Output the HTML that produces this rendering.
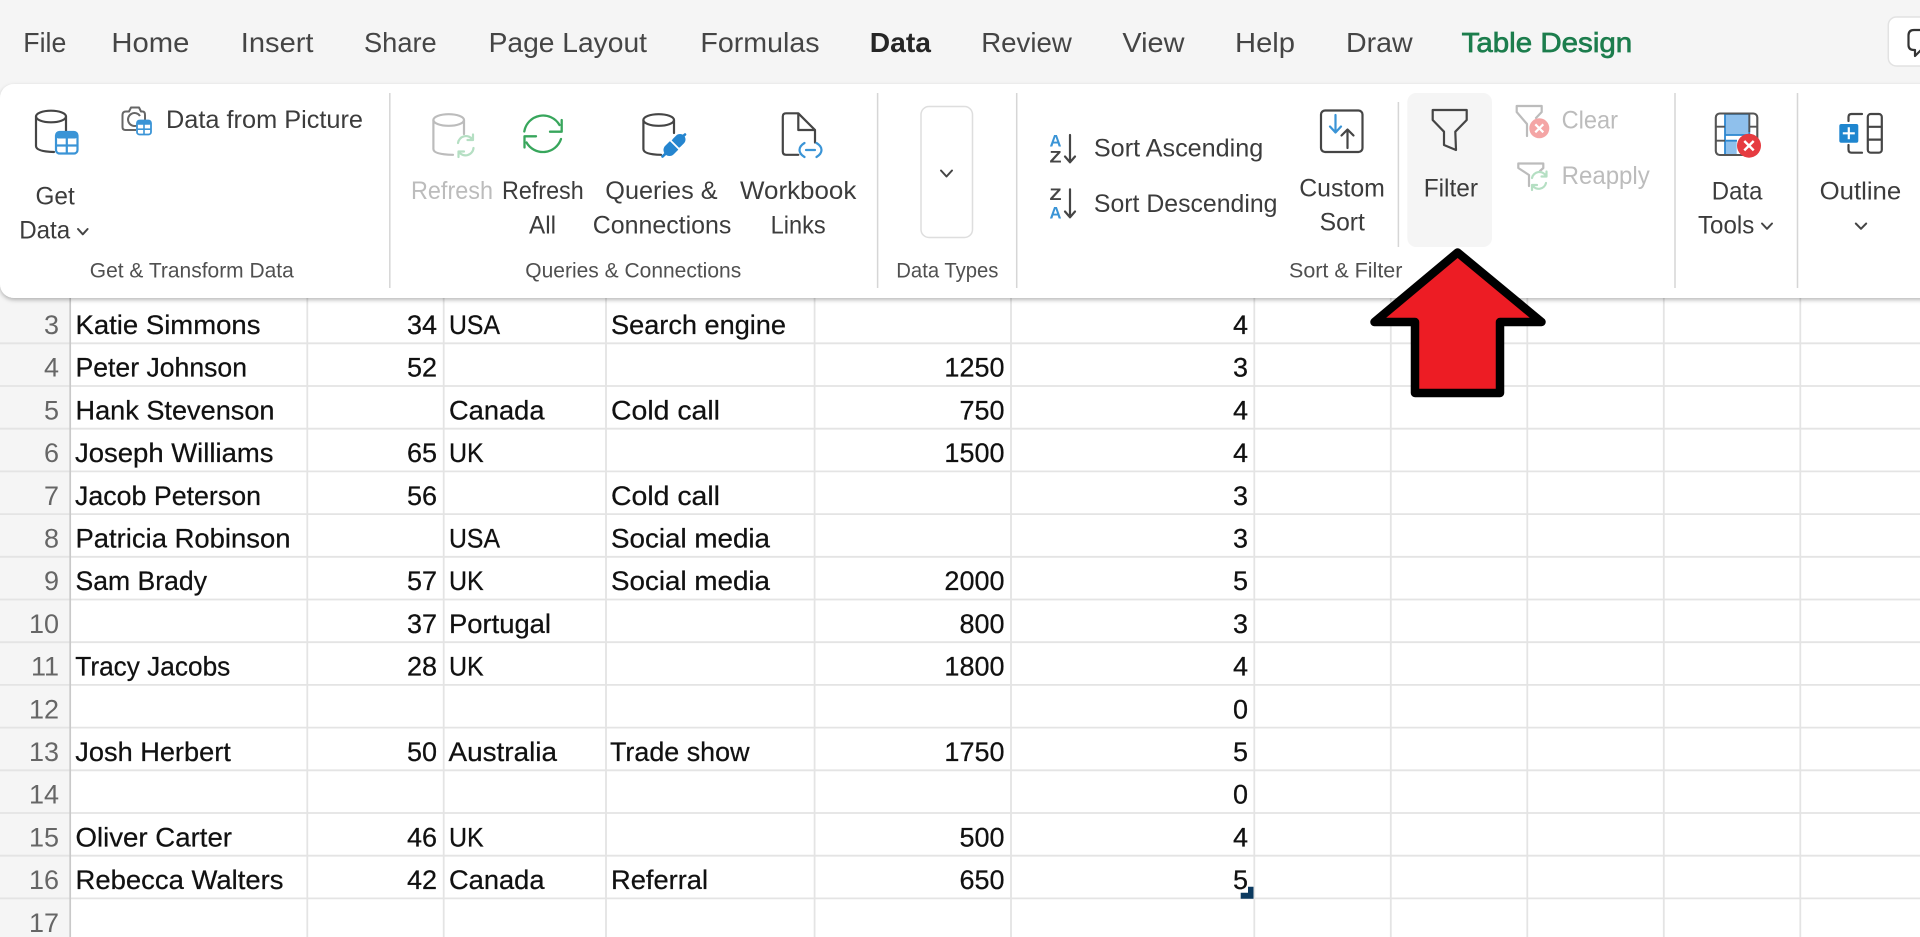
<!DOCTYPE html>
<html lang="en"><head><meta charset="utf-8"><title>Excel Data ribbon</title>
<style>
html,body{margin:0;padding:0;width:1920px;height:937px;overflow:hidden;background:#fff}
svg{display:block;position:absolute;left:0;top:0;filter:blur(.35px)}
text{font-family:"Liberation Sans",sans-serif;white-space:pre}
.m{font-size:28px;fill:#454545}
.r{font-size:25px;fill:#3c3c3c}
.d{font-size:25px;fill:#bcbcbc}
.g{font-size:21px;fill:#505050}
.c{font-size:27px;fill:#111;stroke:#111;stroke-width:.25}
.n{font-size:27px;fill:#111;stroke:#111;stroke-width:.25;text-anchor:end}
.h{font-size:27px;fill:#666;text-anchor:end}
.ic{fill:none;stroke:#454545;stroke-width:2.2;stroke-linecap:round;stroke-linejoin:round}
.bl{fill:none;stroke:#3a94d6;stroke-width:2.2;stroke-linecap:round;stroke-linejoin:round}
.gy{fill:none;stroke:#bcbcbc;stroke-width:2.2;stroke-linecap:round;stroke-linejoin:round}
.pg{fill:none;stroke:#b5dfc3;stroke-width:2.2;stroke-linecap:round;stroke-linejoin:round}
.ch{fill:none;stroke:#454545;stroke-width:2;stroke-linecap:round;stroke-linejoin:round}
</style></head><body>
<svg width="1920" height="937" viewBox="0 0 1920 937" xmlns="http://www.w3.org/2000/svg">
<defs><filter id="s" x="-5%" y="-10%" width="110%" height="125%"><feDropShadow dx="0" dy="2" stdDeviation="2.2" flood-color="#000" flood-opacity=".28"/></filter></defs>
<rect width="1920" height="937" fill="#fff"/>
<rect width="70" height="937" fill="#f5f5f5"/>
<g stroke="#e4e4e4" stroke-width="1.8" fill="none">
<path d="M0 343.3H1920M0 386H1920M0 428.7H1920M0 471.4H1920M0 514.1H1920M0 556.8H1920M0 599.5H1920M0 642.2H1920M0 684.9H1920M0 727.6H1920M0 770.3H1920M0 813H1920M0 855.7H1920M0 898.4H1920"/>
<path d="M307.3 290V937M443.7 290V937M606 290V937M814.6 290V937M1011 290V937M1254.3 290V937M1390.8 290V937M1527.3 290V937M1663.8 290V937M1800.3 290V937"/>
</g>
<path d="M70.2 290V937" stroke="#c9c9c9" stroke-width="1.7"/>
<g>
<text class="h" x="59" y="334">3</text><text class="h" x="59" y="376.7">4</text><text class="h" x="59" y="419.4">5</text><text class="h" x="59" y="462.1">6</text><text class="h" x="59" y="504.8">7</text><text class="h" x="59" y="547.5">8</text><text class="h" x="59" y="590.2">9</text><text class="h" x="59" y="632.9">10</text><text class="h" x="59" y="675.6">11</text><text class="h" x="59" y="718.3">12</text><text class="h" x="59" y="761">13</text><text class="h" x="59" y="803.7">14</text><text class="h" x="59" y="846.4">15</text><text class="h" x="59" y="889.1">16</text><text class="h" x="59" y="931.8">17</text>
</g>
<text class="c" x="75.5" y="334" textLength="185" lengthAdjust="spacingAndGlyphs">Katie Simmons</text>
<text class="c" x="75.5" y="376.7" textLength="171.5" lengthAdjust="spacingAndGlyphs">Peter Johnson</text>
<text class="c" x="75.5" y="419.4" textLength="199" lengthAdjust="spacingAndGlyphs">Hank Stevenson</text>
<text class="c" x="75" y="462.1" textLength="198.5" lengthAdjust="spacingAndGlyphs">Joseph Williams</text>
<text class="c" x="75" y="504.8" textLength="186" lengthAdjust="spacingAndGlyphs">Jacob Peterson</text>
<text class="c" x="75.5" y="547.5" textLength="215" lengthAdjust="spacingAndGlyphs">Patricia Robinson</text>
<text class="c" x="75.5" y="590.2" textLength="131.5" lengthAdjust="spacingAndGlyphs">Sam Brady</text>
<text class="c" x="75.3" y="675.6" textLength="155" lengthAdjust="spacingAndGlyphs">Tracy Jacobs</text>
<text class="c" x="75.3" y="761" textLength="155.5" lengthAdjust="spacingAndGlyphs">Josh Herbert</text>
<text class="c" x="75.5" y="846.4" textLength="156.5" lengthAdjust="spacingAndGlyphs">Oliver Carter</text>
<text class="c" x="75.5" y="889.1" textLength="208" lengthAdjust="spacingAndGlyphs">Rebecca Walters</text>
<text class="n" x="437" y="334">34</text><text class="n" x="437" y="376.7">52</text><text class="n" x="437" y="462.1">65</text><text class="n" x="437" y="504.8">56</text><text class="n" x="437" y="590.2">57</text><text class="n" x="437" y="632.9">37</text><text class="n" x="437" y="675.6">28</text><text class="n" x="437" y="761">50</text><text class="n" x="437" y="846.4">46</text><text class="n" x="437" y="889.1">42</text>
<text class="c" x="449" y="334" textLength="51" lengthAdjust="spacingAndGlyphs">USA</text>
<text class="c" x="449" y="419.4" textLength="95.5" lengthAdjust="spacingAndGlyphs">Canada</text>
<text class="c" x="449" y="462.1" textLength="34.7" lengthAdjust="spacingAndGlyphs">UK</text>
<text class="c" x="449" y="547.5" textLength="51" lengthAdjust="spacingAndGlyphs">USA</text>
<text class="c" x="449" y="590.2" textLength="34.7" lengthAdjust="spacingAndGlyphs">UK</text>
<text class="c" x="449" y="632.9" textLength="102" lengthAdjust="spacingAndGlyphs">Portugal</text>
<text class="c" x="449" y="675.6" textLength="34.7" lengthAdjust="spacingAndGlyphs">UK</text>
<text class="c" x="448.5" y="761" textLength="108.5" lengthAdjust="spacingAndGlyphs">Australia</text>
<text class="c" x="449" y="846.4" textLength="34.7" lengthAdjust="spacingAndGlyphs">UK</text>
<text class="c" x="449" y="889.1" textLength="95.5" lengthAdjust="spacingAndGlyphs">Canada</text>
<text class="c" x="611" y="334" textLength="175" lengthAdjust="spacingAndGlyphs">Search engine</text>
<text class="c" x="611" y="419.4" textLength="109" lengthAdjust="spacingAndGlyphs">Cold call</text>
<text class="c" x="611" y="504.8" textLength="109" lengthAdjust="spacingAndGlyphs">Cold call</text>
<text class="c" x="611" y="547.5" textLength="159" lengthAdjust="spacingAndGlyphs">Social media</text>
<text class="c" x="611" y="590.2" textLength="159" lengthAdjust="spacingAndGlyphs">Social media</text>
<text class="c" x="610" y="761" textLength="139.5" lengthAdjust="spacingAndGlyphs">Trade show</text>
<text class="c" x="611" y="889.1" textLength="97" lengthAdjust="spacingAndGlyphs">Referral</text>
<text class="n" x="1004.5" y="376.7">1250</text><text class="n" x="1004.5" y="419.4">750</text><text class="n" x="1004.5" y="462.1">1500</text><text class="n" x="1004.5" y="590.2">2000</text><text class="n" x="1004.5" y="632.9">800</text><text class="n" x="1004.5" y="675.6">1800</text><text class="n" x="1004.5" y="761">1750</text><text class="n" x="1004.5" y="846.4">500</text><text class="n" x="1004.5" y="889.1">650</text>
<text class="n" x="1248" y="334">4</text><text class="n" x="1248" y="376.7">3</text><text class="n" x="1248" y="419.4">4</text><text class="n" x="1248" y="462.1">4</text><text class="n" x="1248" y="504.8">3</text><text class="n" x="1248" y="547.5">3</text><text class="n" x="1248" y="590.2">5</text><text class="n" x="1248" y="632.9">3</text><text class="n" x="1248" y="675.6">4</text><text class="n" x="1248" y="718.3">0</text><text class="n" x="1248" y="761">5</text><text class="n" x="1248" y="803.7">0</text><text class="n" x="1248" y="846.4">4</text><text class="n" x="1248" y="889.1">5</text>
<path d="M1248 886.7H1253.5V898.7H1240.7V892.7H1248Z" fill="#0c3a60"/>

<!-- title band -->
<rect width="1920" height="92" fill="#f5f5f5"/>
<rect x="1888.3" y="17" width="60" height="49" rx="8" fill="#fff" stroke="#e2e2e2" stroke-width="1.5"/>
<path d="M1922 30H1914Q1908.5 30 1908.5 35.5V45Q1908.5 50 1914 50H1915V56L1921 50H1924" fill="none" stroke="#333" stroke-width="2.2" stroke-linejoin="round"/>
<text class="m" x="23.3" y="52" textLength="43" lengthAdjust="spacingAndGlyphs">File</text>
<text class="m" x="111.4" y="52" textLength="78" lengthAdjust="spacingAndGlyphs">Home</text>
<text class="m" x="240.8" y="52" textLength="72.7" lengthAdjust="spacingAndGlyphs">Insert</text>
<text class="m" x="364" y="52" textLength="72.7" lengthAdjust="spacingAndGlyphs">Share</text>
<text class="m" x="488.6" y="52" textLength="158.4" lengthAdjust="spacingAndGlyphs">Page Layout</text>
<text class="m" x="700.4" y="52" textLength="119.2" lengthAdjust="spacingAndGlyphs">Formulas</text>
<text class="m" x="869.8" y="52" textLength="61.2" lengthAdjust="spacingAndGlyphs" font-weight="700" style="fill:#262626">Data</text>
<text class="m" x="981.2" y="52" textLength="90.6" lengthAdjust="spacingAndGlyphs">Review</text>
<text class="m" x="1122.4" y="52" textLength="62.1" lengthAdjust="spacingAndGlyphs">View</text>
<text class="m" x="1235" y="52" textLength="60" lengthAdjust="spacingAndGlyphs">Help</text>
<text class="m" x="1346" y="52" textLength="66.7" lengthAdjust="spacingAndGlyphs">Draw</text>
<text class="m" x="1461.6" y="52" textLength="170.6" lengthAdjust="spacingAndGlyphs" style="fill:#1c7d4d;stroke:#1c7d4d;stroke-width:.7">Table Design</text>

<!-- ribbon -->
<rect x="0" y="84" width="1980" height="214" rx="14" fill="#fff" filter="url(#s)"/>
<g stroke="#d6d6d6" stroke-width="1.5">
<path d="M389.8 93V288M877.6 93V288M1016.7 93V288M1675 93V288M1797.5 93V288M1398.4 102V247"/>
</g>
<rect x="1407.3" y="93" width="84.7" height="154" rx="9" fill="#f5f5f5"/>

<text class="r" x="35.5" y="204.3" textLength="39.2" lengthAdjust="spacingAndGlyphs">Get</text>
<text class="r" x="19.2" y="238.7" textLength="51" lengthAdjust="spacingAndGlyphs">Data</text>
<path class="ch" d="M78 229L82.8 234.3L87.6 229"/>
<text class="r" x="166" y="128" textLength="197" lengthAdjust="spacingAndGlyphs">Data from Picture</text>
<text class="g" x="89.8" y="277.3" textLength="204" lengthAdjust="spacingAndGlyphs">Get &amp; Transform Data</text>
<text class="d" x="411" y="199" textLength="82" lengthAdjust="spacingAndGlyphs">Refresh</text>
<text class="r" x="502" y="199" textLength="81.7" lengthAdjust="spacingAndGlyphs">Refresh</text>
<text class="r" x="529" y="233.5" textLength="27" lengthAdjust="spacingAndGlyphs">All</text>
<text class="r" x="605.3" y="199" textLength="112.3" lengthAdjust="spacingAndGlyphs">Queries &amp;</text>
<text class="r" x="592.7" y="233.5" textLength="138.7" lengthAdjust="spacingAndGlyphs">Connections</text>
<text class="g" x="525.3" y="277.3" textLength="215.9" lengthAdjust="spacingAndGlyphs">Queries &amp; Connections</text>
<text class="r" x="740" y="199" textLength="116.3" lengthAdjust="spacingAndGlyphs">Workbook</text>
<text class="r" x="770.6" y="233.5" textLength="55.1" lengthAdjust="spacingAndGlyphs">Links</text>
<rect x="921" y="106.5" width="51.5" height="131" rx="8" fill="#fff" stroke="#dedede" stroke-width="1.5"/>
<path class="ch" d="M941 170.5L946.5 176.5L952 170.5"/>
<text class="g" x="896.3" y="277.3" textLength="102.1" lengthAdjust="spacingAndGlyphs">Data Types</text>
<text class="r" x="1093.9" y="156.7" textLength="169.4" lengthAdjust="spacingAndGlyphs">Sort Ascending</text>
<text class="r" x="1093.9" y="212" textLength="183.6" lengthAdjust="spacingAndGlyphs">Sort Descending</text>
<text class="r" x="1299.2" y="196.7" textLength="85.7" lengthAdjust="spacingAndGlyphs">Custom</text>
<text class="r" x="1319.6" y="230.7" textLength="45.3" lengthAdjust="spacingAndGlyphs">Sort</text>
<text class="r" x="1423.7" y="196.7" textLength="54.3" lengthAdjust="spacingAndGlyphs">Filter</text>
<text class="d" x="1561.6" y="128.3" textLength="56.4" lengthAdjust="spacingAndGlyphs">Clear</text>
<text class="d" x="1561.6" y="184" textLength="88.2" lengthAdjust="spacingAndGlyphs">Reapply</text>
<text class="g" x="1289" y="277.3" textLength="113.4" lengthAdjust="spacingAndGlyphs">Sort &amp; Filter</text>
<text class="r" x="1711.8" y="199.3" textLength="50.6" lengthAdjust="spacingAndGlyphs">Data</text>
<text class="r" x="1698" y="233.3" textLength="56.3" lengthAdjust="spacingAndGlyphs">Tools</text>
<path class="ch" d="M1762 223.5L1767 228.8L1772 223.5"/>
<text class="r" x="1819.6" y="199.3" textLength="81.6" lengthAdjust="spacingAndGlyphs">Outline</text>
<path class="ch" d="M1855.8 223.5L1861 228.8L1866.2 223.5"/>

<!-- Get Data icon -->
<ellipse class="ic" cx="51" cy="116.5" rx="15" ry="5.8"/>
<path class="ic" d="M36 116.5V146Q36 151.5 54 152M66 116.5V131"/>
<rect x="56" y="132" width="21.5" height="21.5" rx="3.5" fill="#fff" stroke="#3a94d6" stroke-width="2.2"/>
<rect x="56" y="132" width="21.5" height="6.5" rx="2.5" fill="#3a94d6"/>
<path d="M66.8 138V153M56 145.5H77" stroke="#3a94d6" stroke-width="2.2"/>
<!-- Camera icon -->
<path d="M136 130H125.5Q122.5 130 122.5 127V115Q122.5 111.5 126 111.5H129L131 107.5H139L141 111.5H142.5Q145 111.5 145 115V120" fill="none" stroke="#666" stroke-width="2" stroke-linejoin="round"/>
<path d="M137 125.5A6.5 6.5 0 1 1 140 116" fill="none" stroke="#666" stroke-width="2"/>
<rect x="137" y="120.5" width="14" height="14" rx="2.5" fill="#fff" stroke="#3a94d6" stroke-width="1.8"/>
<rect x="137" y="120.5" width="14" height="4.2" rx="1.5" fill="#3a94d6"/>
<path d="M144 124V134M137 129.2H151" stroke="#3a94d6" stroke-width="1.6"/>
<!-- Refresh (disabled) -->
<ellipse class="gy" cx="448.7" cy="120" rx="15.3" ry="5.8"/>
<path class="gy" d="M433.4 120V149Q433.4 154.5 453 154.8M464 120V134"/>
<path class="pg" d="M458 143A8 8 0 0 1 472.5 139.5M473.5 148A8 8 0 0 1 459 152M473 134.5V140H467.5M458.5 157V151.5H464"/>
<!-- Refresh All -->
<g fill="none" stroke="#38a65c" stroke-width="2.3" stroke-linecap="round" stroke-linejoin="round">
<path d="M524.3 131.5A19 19 0 0 1 559.5 125"/>
<path d="M561.7 120V131.7H550"/>
<path d="M561 139A19 19 0 0 1 526.5 142.5"/>
<path d="M524.5 147.5V136.3H536"/>
</g>
<!-- Queries & Connections -->
<ellipse class="ic" cx="658.7" cy="120" rx="15.3" ry="5.8"/>
<path class="ic" d="M643.400 120V149Q643.4 154.500 661 154.800M674 120V133"/>
<g stroke="#2585cf" fill="none">
<path d="M662.500 156.500L669 150.500" stroke-width="2.600" stroke-linecap="round"/>
<path d="M669.500 150L673.500 146" stroke-width="12" stroke-linecap="round"/>
<path d="M677 142.500L680 139.500" stroke-width="11" stroke-linecap="round"/>
<path d="M681 138L685 134.500" stroke-width="2.600" stroke-linecap="round"/>
</g>
<path d="M669.500 139.500L680.500 150.500" stroke="#fff" stroke-width="1.800"/>
<!-- Workbook Links -->
<path class="ic" d="M798.300 154.800H786Q782.800 154.800 782.800 151.500V116.500Q782.800 113.300 786 113.300H798.300L815 130V142.500M798.300 113.300V130H815"/>
<path class="bl" d="M804.500 143Q799.500 146 799.500 150T804.500 157M816.500 143Q821.500 146 821.500 150T816.500 157M806 150H815"/>
<!-- Sort icons -->
<text x="1049.500" y="146.700" font-size="16.500" font-weight="700" fill="#3a94d6" textLength="12" lengthAdjust="spacingAndGlyphs">A</text>
<text x="1049.500" y="162.500" font-size="16.500" font-weight="700" fill="#454545" textLength="12" lengthAdjust="spacingAndGlyphs">Z</text>
<path class="ic" d="M1070 135V162M1065 156.500L1070 162.300L1075 156.500"/>
<text x="1049.500" y="200" font-size="16.500" font-weight="700" fill="#454545" textLength="12" lengthAdjust="spacingAndGlyphs">Z</text>
<text x="1049.500" y="218.300" font-size="16.500" font-weight="700" fill="#3a94d6" textLength="12" lengthAdjust="spacingAndGlyphs">A</text>
<path class="ic" d="M1070 189.300V217M1065 211.500L1070 217.300L1075 211.500"/>
<!-- Custom Sort -->
<rect class="ic" x="1321" y="110.500" width="41.500" height="41.500" rx="4"/>
<path class="bl" d="M1335.500 115V132M1330 126.500L1335.500 132.500L1341 126.500"/>
<path class="ic" d="M1347.500 148V130M1341.500 135.500L1347.500 129.500L1353.500 135.500"/>
<!-- Filter -->
<path class="ic" d="M1432.700 110H1466.700V120L1455.300 131.700L1456 150L1444 145V131.700L1432.700 120Z"/>
<!-- Clear -->
<path class="gy" d="M1527 136V124L1516.700 112V106H1541.700V112L1536 118"/>
<circle cx="1539.300" cy="128.300" r="10" fill="#f4a5a5"/>
<path d="M1535.300 124.300L1543.300 132.300M1543.300 124.300L1535.300 132.300" stroke="#fff" stroke-width="2.200"/>
<!-- Reapply -->
<path class="gy" d="M1529 186V175L1518.300 168V163.500H1543.300V168L1540 171"/>
<path class="pg" d="M1532 178A7.500 7.500 0 0 1 1546 176M1546 183A7.500 7.500 0 0 1 1532.500 185.500M1546.500 171.500V176.500H1541.500M1532 190V185H1537"/>
<!-- Data Tools -->
<rect x="1725" y="114" width="24.300" height="21" fill="#8fc0ec"/>
<rect x="1725" y="140.700" width="11.700" height="14" fill="#8fc0ec"/>
<path d="M1725 114H1749.300M1725 135H1749.300M1725 114V155M1749.300 114V135M1725 140.700H1737M1725 155H1737" stroke="#2d86cf" stroke-width="1.800" fill="none"/>
<rect x="1715.800" y="113.500" width="41.500" height="41.500" rx="4" fill="none" stroke="#555" stroke-width="2.100"/>
<path d="M1716 126.700H1725M1749.300 126.700H1757M1716 140.700H1725M1749.300 114V132" stroke="#555" stroke-width="1.800"/>
<circle cx="1749" cy="145.700" r="12" fill="#e63b40"/>
<path d="M1744.300 141L1753.700 150.400M1753.700 141L1744.300 150.400" stroke="#fff" stroke-width="2.400"/>
<!-- Outline -->
<path class="ic" d="M1862 114H1851.500Q1848.500 114 1848.500 117V121M1848.500 145V149.500Q1848.500 152.700 1851.500 152.700H1862"/>
<rect class="ic" x="1867.800" y="114" width="14" height="38.700" rx="3"/>
<path class="ic" d="M1868 126.800H1881.500M1868 139.600H1881.500"/>
<rect x="1839.300" y="124" width="19" height="18.700" rx="2" fill="#1f86cf"/>
<path d="M1842.800 133.300H1854.800M1848.800 127.300V139.300" stroke="#fff" stroke-width="2.200"/>

<!-- Red arrow -->
<path d="M1457.600 252.500L1374.500 322H1415V393H1500V322H1541.500Z" fill="#ed1c24" stroke="#000" stroke-width="8.500" stroke-linejoin="round"/>
</svg>
</body></html>
